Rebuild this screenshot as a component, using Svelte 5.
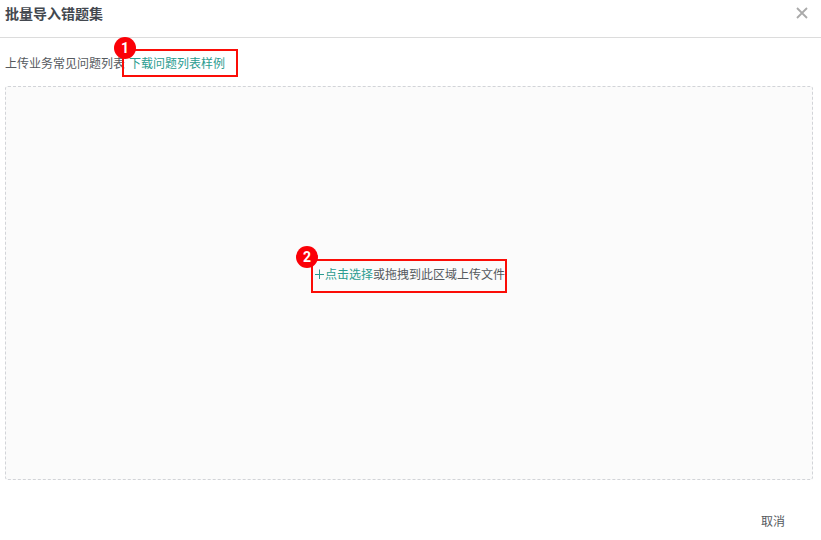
<script lang="ts">
  let { title = '批量导入错题集', onclose = () => {} }: { title?: string; onclose?: () => void } = $props();

  let dragging = $state(false);

  function handleDrop(e: DragEvent) {
    e.preventDefault();
    dragging = false;
  }
</script>

<div class="dialog" role="dialog" aria-labelledby="dialog-title">
  <header class="header">
    <h1 id="dialog-title">{title}</h1>
    <button class="close" type="button" aria-label="关闭" onclick={onclose}>
      <svg viewBox="0 0 12 12" width="12" height="12">
        <path d="M1 1 11 11M11 1 1 11"></path>
      </svg>
    </button>
  </header>

  <main class="body">
    <p class="intro">
      <span>上传业务常见问题列表</span>
      <span class="step">
        <a href="#sample">下载问题列表样例</a>
        <span class="frame frame-sample"><span class="badge">1</span></span>
      </span>
    </p>

    <div
      class="dropzone"
      class:dragging
      role="region"
      aria-label="上传文件"
      ondragover={(e) => { e.preventDefault(); dragging = true; }}
      ondragleave={() => (dragging = false)}
      ondrop={handleDrop}
    >
      <div class="step hint">
        <button class="pick" type="button">
          <svg viewBox="0 0 12 12" width="12" height="12">
            <path d="M6.5 1.5V11M2 6.5H11"></path>
          </svg>点击选择</button><span>或拖拽到此区域上传文件</span>
        <span class="frame frame-upload"><span class="badge">2</span></span>
      </div>
    </div>
  </main>

  <footer class="footer">
    <button class="cancel" type="button" onclick={onclose}>取消</button>
  </footer>
</div>

<style>
  :global(body) {
    margin: 0;
    background: #fff;
  }

  .dialog {
    box-sizing: border-box;
    min-height: 100vh;
    display: flex;
    flex-direction: column;
    font-family: "Noto Sans CJK SC", "Noto Sans", sans-serif;
    font-size: 12px;
    line-height: 20px;
    color: #55595e;
  }

  button {
    padding: 0;
    border: 0;
    background: none;
    font: inherit;
    color: inherit;
    cursor: pointer;
  }

  .header {
    display: flex;
    justify-content: space-between;
    align-items: center;
    padding: 3px 13px 14px 5px;
    border-bottom: 1px solid #dcdcdc;
  }

  .header h1 {
    margin: 0;
    font-size: 14px;
    font-weight: 700;
    line-height: 20px;
    color: #43484f;
  }

  .close {
    display: flex;
  }

  .close svg {
    fill: none;
    stroke: #aaa;
    stroke-width: 1.8;
  }

  .body {
    flex: 1;
    display: flex;
    flex-direction: column;
    padding: 15px 8px 0 5px;
  }

  .intro {
    display: flex;
    gap: 4px;
    margin: 0 0 13px;
  }

  .intro a {
    color: #2b9c90;
    text-decoration: none;
  }

  .dropzone {
    flex: 1;
    display: flex;
    justify-content: center;
    align-items: center;
    padding-bottom: 18px;
    border: 1px dashed #d2d4d8;
    border-radius: 3px;
    background: #fbfbfb;
  }

  .dropzone.dragging {
    border-color: #2b9c90;
  }

  .step {
    position: relative;
  }

  .hint {
    display: flex;
  }

  .pick {
    display: flex;
    align-items: center;
    color: #2b9c90;
  }

  .pick svg {
    fill: none;
    stroke: currentColor;
    stroke-width: 1;
  }

  /* Numbered callouts laid over the steps */
  .frame {
    position: absolute;
    border: 2px solid #fb0d07;
    pointer-events: none;
  }

  .frame-sample {
    inset: -4px -13px -4px -7px;
  }

  .frame-upload {
    inset: -5px -2px -9px -2px;
  }

  .badge {
    position: absolute;
    top: -15px;
    left: -10px;
    width: 22px;
    height: 22px;
    border-radius: 50%;
    background: #fb0007;
    color: #fff;
    font-family: Roboto, sans-serif;
    font-size: 14px;
    font-weight: 700;
    line-height: 22px;
    text-align: center;
  }

  .frame-sample .badge {
    top: -14px;
  }

  .frame-upload .badge {
    left: -17px;
  }

  .footer {
    display: flex;
    justify-content: flex-end;
    padding: 31px 36px 9px;
  }
</style>
